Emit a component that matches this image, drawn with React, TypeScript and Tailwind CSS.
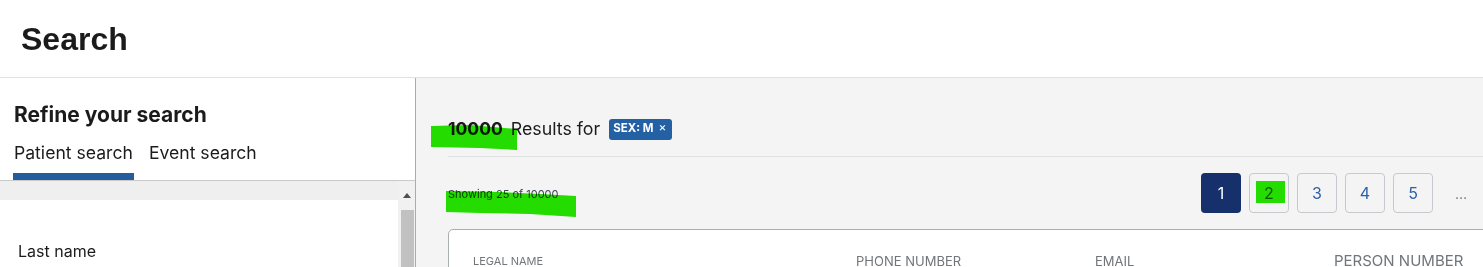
// Search page – refine panel + results list header

const PAGES = ["1", "2", "3", "4", "5"];

const COLUMNS = [
  { label: "Legal name", size: "text-[11px]" },
  { label: "Phone number", size: "text-[13px]" },
  { label: "Email", size: "text-[13px]" },
  { label: "Person number", size: "text-[15px]" },
];

function Highlights() {
  // marker annotations drawn over the screenshot
  return (
    <svg
      className="pointer-events-none absolute left-0 top-0 mix-blend-multiply"
      width="1483"
      height="267"
      viewBox="0 0 1483 267"
    >
      <path d="M431 126 L470 125 L517 129 L517 150 L480 148 L431 147 Z" fill="#25e600" />
      <path d="M446 191 L500 192 L540 194 L576 196 L576 217 L530 214 L480 213 L446 212 Z" fill="#25e600" />
      <rect x="1256" y="181" width="29" height="22" fill="#25e600" />
    </svg>
  );
}

function Scrollbar() {
  return (
    <div className="w-[17px] shrink-0 bg-[#f1f1f1] flex flex-col items-center">
      <div className="h-[29px] w-full flex items-center justify-center">
        <svg width="8" height="5" viewBox="0 0 8 5">
          <path d="M0 5 L4 0 L8 5 Z" fill="#505050" />
        </svg>
      </div>
      <div className="w-[13px] flex-1 bg-[#c1c1c1] ml-[1px]" />
    </div>
  );
}

export default function App() {
  return (
    <div
      className="relative w-[1483px] h-[267px] overflow-hidden bg-white text-[#1b1b1b]"
      style={{ fontFamily: "Inter, 'Noto Sans', sans-serif" }}
    >
      <header className="h-[78px] border-b border-[#dfe1e2] flex items-center px-[21px]">
        <h1 className="text-[32px] font-bold font-['Liberation_Sans',Arial,sans-serif] text-[#1b1b1b]">
          Search
        </h1>
      </header>

      <div className="flex h-[189px]">
        {/* refine panel */}
        <aside className="w-[416px] shrink-0 border-r border-[#ababab] flex flex-col">
          <h2 className="mt-[23px] h-[28px] leading-[28px] px-[14px] text-[21px] font-bold">
            Refine your search
          </h2>
          <div className="mt-[12px] flex gap-[15px] px-[13px] border-b border-[#c9c9c9]">
            <div className="flex flex-col">
              <span className="h-[24px] leading-[24px] text-[17.6px] px-[1px]">Patient search</span>
              <span className="mt-[8px] h-[7px] bg-[#245c9e]" />
            </div>
            <div className="flex flex-col">
              <span className="h-[24px] leading-[24px] text-[17.6px]">Event search</span>
              <span className="mt-[8px] h-[7px]" />
            </div>
          </div>
          <div className="flex flex-1 bg-[#efefef]">
            <div className="flex-1 mt-[19px] bg-white">
              <p className="mt-[39px] px-[18px] h-[24px] leading-[24px] text-[16px]">Last name</p>
            </div>
            <Scrollbar />
          </div>
        </aside>

        {/* results */}
        <main className="flex-1 bg-[#f4f4f4] pl-[32px]">
          <div className="w-[1153px]">
            <div className="mt-[39px] pb-[15px] border-b border-[#dfe1e2]">
              <div className="h-[24px] flex items-center gap-[8px]">
                <span className="text-[17.5px] font-bold">10000</span>
                <span className="text-[17.8px]">Results for</span>
                <span className="ml-[1px] h-[21px] pl-[4px] pr-[6px] rounded-[3px] bg-[#2460a4] text-white text-[11.5px] font-bold flex items-center gap-[5px]">
                  SEX: M
                  <span className="text-[12px] font-normal leading-none -mt-[4px]">×</span>
                </span>
              </div>
            </div>

            <div className="mt-[16px] h-[40px] flex items-center justify-between">
              <span className="mt-[3px] text-[11px] text-[#3d4551]">Showing 25 of 10000</span>
              <nav className="flex items-center gap-[8px]">
                {PAGES.map((p) => (
                  <span
                    key={p}
                    className={
                      p === "1"
                        ? "w-[40px] h-[40px] rounded-[4px] bg-[#15306a] text-white text-[16px] flex items-center justify-center"
                        : "w-[40px] h-[40px] rounded-[4px] border border-[#c6cace] text-[#2b5fa8] text-[16px] flex items-center justify-center"
                    }
                  >
                    {p}
                  </span>
                ))}
                <span className="w-[40px] h-[40px] flex items-center justify-center text-[#71767a] text-[14px]">
                  …
                </span>
                <span className="w-[40px] h-[40px] rounded-[4px] border border-[#c6cace] text-[#2b5fa8] text-[16px] flex items-center justify-center">
                  400
                </span>
                <span className="w-[64px] h-[40px] flex items-center justify-center text-[#2b5fa8] text-[16px]">
                  Next
                </span>
              </nav>
            </div>

            <div className="mt-[16px] h-[60px] bg-white border border-[#a9aeb1] rounded-tl-[5px] pl-[24px] pt-[23px]">
              <div className="grid grid-cols-[383px_239px_239px_1fr] items-end">
                {COLUMNS.map((c) => (
                  <span key={c.label} className={`${c.size} uppercase text-[#71767a] leading-[16px]`}>
                    {c.label}
                  </span>
                ))}
              </div>
            </div>
          </div>
        </main>
      </div>

      <Highlights />
    </div>
  );
}
